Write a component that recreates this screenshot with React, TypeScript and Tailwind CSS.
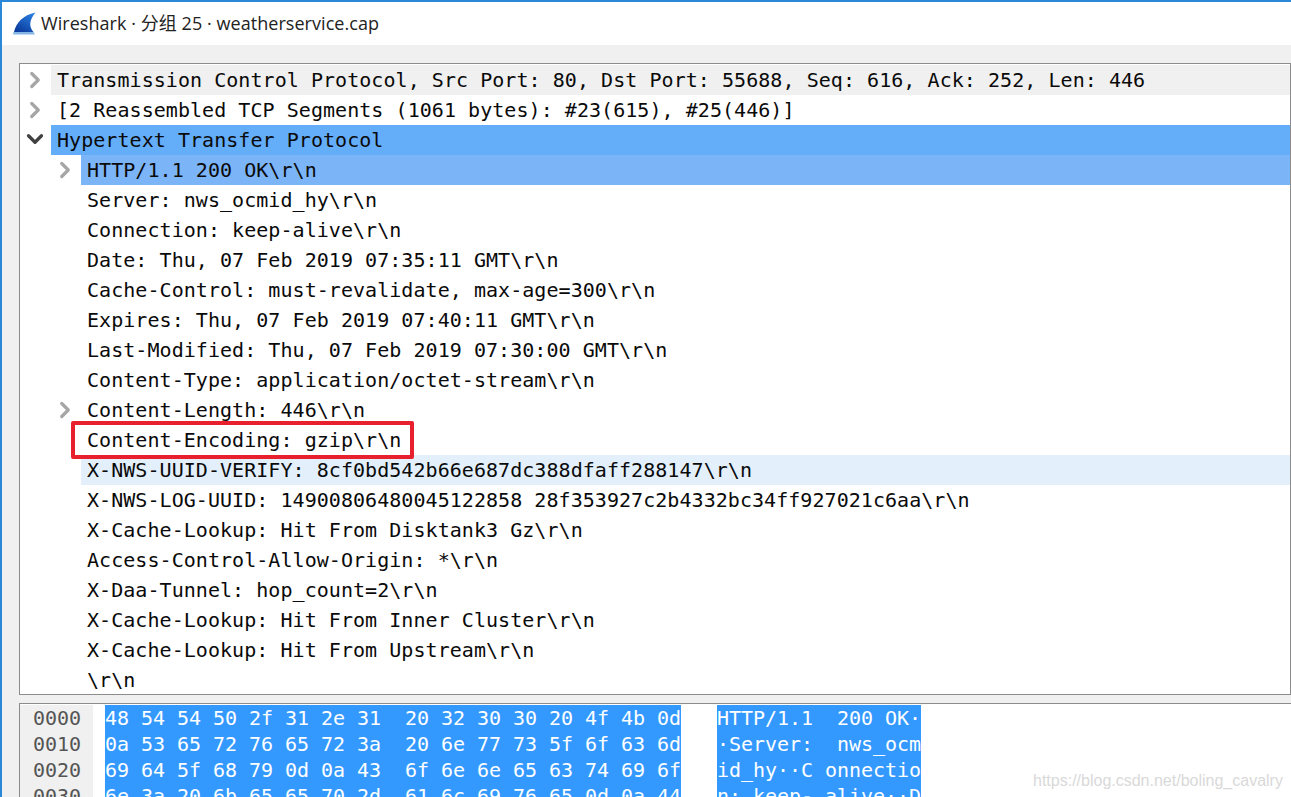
import { ChevronDown, ChevronRight } from 'lucide-react';

type Row = {
  text: string;
  depth: number;
  arrow?: 'right' | 'down';
  bg?: string;
};

const rows: Row[] = [
  { text: 'Transmission Control Protocol, Src Port: 80, Dst Port: 55688, Seq: 616, Ack: 252, Len: 446', depth: 0, arrow: 'right', bg: 'bg-[#f0f0f0]' },
  { text: '[2 Reassembled TCP Segments (1061 bytes): #23(615), #25(446)]', depth: 0, arrow: 'right' },
  { text: 'Hypertext Transfer Protocol', depth: 0, arrow: 'down', bg: 'bg-[#64adf9]' },
  { text: 'HTTP/1.1 200 OK\\r\\n', depth: 1, arrow: 'right', bg: 'bg-[#7cb5f7]' },
  { text: 'Server: nws_ocmid_hy\\r\\n', depth: 1 },
  { text: 'Connection: keep-alive\\r\\n', depth: 1 },
  { text: 'Date: Thu, 07 Feb 2019 07:35:11 GMT\\r\\n', depth: 1 },
  { text: 'Cache-Control: must-revalidate, max-age=300\\r\\n', depth: 1 },
  { text: 'Expires: Thu, 07 Feb 2019 07:40:11 GMT\\r\\n', depth: 1 },
  { text: 'Last-Modified: Thu, 07 Feb 2019 07:30:00 GMT\\r\\n', depth: 1 },
  { text: 'Content-Type: application/octet-stream\\r\\n', depth: 1 },
  { text: 'Content-Length: 446\\r\\n', depth: 1, arrow: 'right' },
  { text: 'Content-Encoding: gzip\\r\\n', depth: 1 },
  { text: 'X-NWS-UUID-VERIFY: 8cf0bd542b66e687dc388dfaff288147\\r\\n', depth: 1, bg: 'bg-[#e3f0fb]' },
  { text: 'X-NWS-LOG-UUID: 14900806480045122858 28f353927c2b4332bc34ff927021c6aa\\r\\n', depth: 1 },
  { text: 'X-Cache-Lookup: Hit From Disktank3 Gz\\r\\n', depth: 1 },
  { text: 'Access-Control-Allow-Origin: *\\r\\n', depth: 1 },
  { text: 'X-Daa-Tunnel: hop_count=2\\r\\n', depth: 1 },
  { text: 'X-Cache-Lookup: Hit From Inner Cluster\\r\\n', depth: 1 },
  { text: 'X-Cache-Lookup: Hit From Upstream\\r\\n', depth: 1 },
  { text: '\\r\\n', depth: 1 },
];

const hexRows = [
  ['0000', '48 54 54 50 2f 31 2e 31  20 32 30 30 20 4f 4b 0d', 'HTTP/1.1  200 OK·'],
  ['0010', '0a 53 65 72 76 65 72 3a  20 6e 77 73 5f 6f 63 6d', '·Server:  nws_ocm'],
  ['0020', '69 64 5f 68 79 0d 0a 43  6f 6e 6e 65 63 74 69 6f', 'id_hy··C onnectio'],
  ['0030', '6e 3a 20 6b 65 65 70 2d  61 6c 69 76 65 0d 0a 44', 'n: keep- alive··D'],
];

function TreeRow({ row }: { row: Row }) {
  return (
    <div className="flex h-[30px] items-center">
      {row.depth === 1 && <div className="w-[30px] shrink-0" />}
      <div className="flex w-[31px] shrink-0 items-center justify-center">
        {row.arrow === 'right' && <ChevronRight className="mr-px size-[26px] text-[#a6a6a6]" strokeWidth={3} absoluteStrokeWidth />}
        {row.arrow === 'down' && <ChevronDown className="mb-[2px] mr-[2px] size-[26px] text-[#404040]" strokeWidth={3} absoluteStrokeWidth />}
      </div>
      <div className={`flex h-full flex-1 items-center pl-[6px] ${row.bg ?? ''}`}>
        <span className="whitespace-pre">{row.text}</span>
      </div>
    </div>
  );
}

export default function App() {
  return (
    <div className="relative flex h-[797px] w-[1291px] flex-col overflow-hidden border-l-2 border-t-2 border-[#2b88d8] bg-[#f0f0f0] font-['DejaVu_Sans_Mono',monospace] text-[20px] tracking-[0.05px] text-[#0a0a0a]">
      {/* Title bar */}
      <div className="flex h-[43px] shrink-0 items-center gap-[5px] bg-white pl-[11px] font-['Open_Sans','Noto_Sans_CJK_SC',sans-serif] text-[18px] tracking-[0.05px] text-[#222]">
        <svg viewBox="0 0 23 23" className="mb-[1px] size-[23px]">
          <defs>
            <linearGradient id="fin" x1="0.8" y1="0" x2="0.2" y2="1">
              <stop offset="0" stopColor="#2b7fe0" />
              <stop offset="1" stopColor="#0a3a9c" />
            </linearGradient>
          </defs>
          <path d="M1 20 C3 11 10 3 22.5 0.5 C17 7 15 14 20.5 20 Z" fill="url(#fin)" />
          <path d="M0.5 20 H20.5 L22 22.5 H0 Z" fill="#86b6e6" />
        </svg>
        <span>Wireshark · 分组 25 · weatherservice.cap</span>
      </div>

      {/* Packet details */}
      <div className="mt-[18px] ml-[17px] h-[632px] shrink-0 overflow-hidden border border-[#8c8c8c] bg-white pt-px">
        {rows.map((row) => (
          <TreeRow key={row.text + row.depth} row={row} />
        ))}
      </div>

      {/* Packet bytes */}
      <div className="mt-[8px] ml-[17px] flex-1 overflow-hidden border-t border-l border-[#8c8c8c] bg-white pt-px tracking-[-0.04px]">
        {hexRows.map(([offset, hex, ascii]) => (
          <div key={offset} className="flex h-[26px] items-center whitespace-pre">
            <div className="flex h-full w-[73px] shrink-0 items-center justify-end bg-[#f0f0f0] pr-[12px] text-[#555]">{offset}</div>
            <div className="ml-[12px] flex h-full w-[576px] shrink-0 items-center bg-[#3399ff] text-white">{hex}</div>
            <div className="ml-[36px] flex h-full w-[204px] shrink-0 items-center bg-[#3399ff] text-white">{ascii}</div>
          </div>
        ))}
      </div>

      {/* Annotation drawn over the screenshot */}
      <div className="absolute top-[419px] left-[69px] h-[38px] w-[343px] rounded-[2px] border-[4px] border-[#e8202e]" />
      <div className="absolute top-[767px] left-[1031px] font-['Liberation_Sans',sans-serif] text-[16px] tracking-normal text-[#d9d9d9]">
        https://blog.csdn.net/boling_cavalry
      </div>
    </div>
  );
}
